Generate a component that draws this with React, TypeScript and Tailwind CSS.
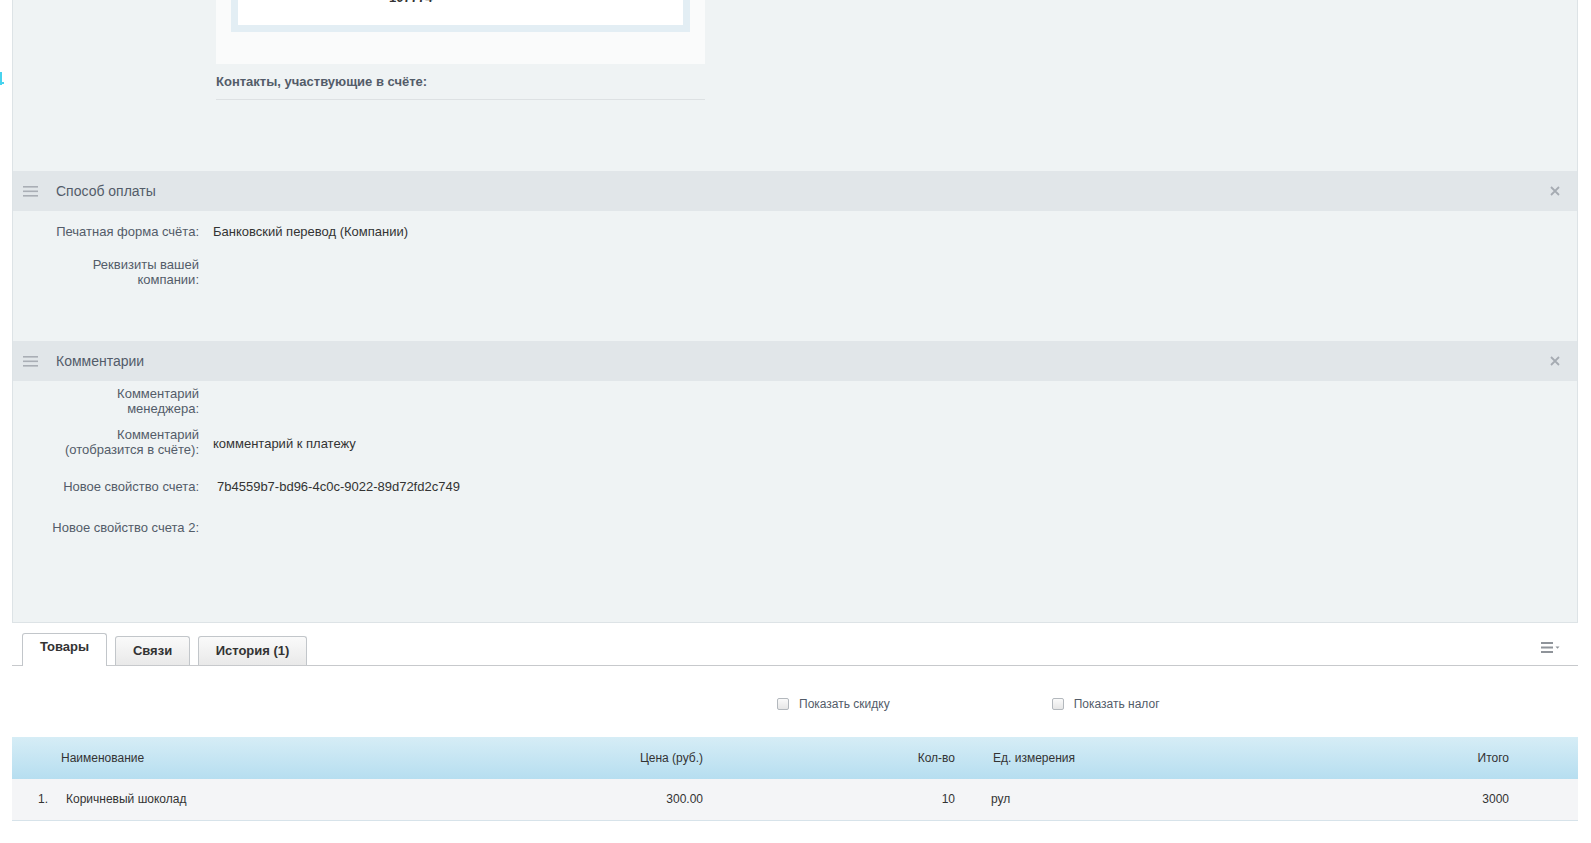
import React from "react";

function Burger() {
  return (
    <svg width="15" height="11" viewBox="0 0 15 11" className="shrink-0">
      <rect x="0" y="0" width="15" height="1.6" fill="#a9aeb5" />
      <rect x="0" y="4.5" width="15" height="1.6" fill="#a9aeb5" />
      <rect x="0" y="9" width="15" height="1.6" fill="#a9aeb5" />
    </svg>
  );
}

function Cross() {
  return (
    <svg width="10" height="10" viewBox="0 0 10 10">
      <path d="M1 1 L9 9 M9 1 L1 9" stroke="#a5abb2" strokeWidth="1.8" />
    </svg>
  );
}

function SectionHeader({ title }: { title: string }) {
  return (
    <div className="h-[40px] bg-[#e1e6e9] flex items-center pl-[10px] pr-[17px]">
      <Burger />
      <span className="ml-[18px] text-[14px] text-[#535c69]">{title}</span>
      <span className="ml-auto flex items-center">
        <Cross />
      </span>
    </div>
  );
}

function Field({ label, value, className = "", valueClass = "" }: { label: React.ReactNode; value?: string; className?: string; valueClass?: string }) {
  return (
    <div className={`flex items-center ${className}`}>
      <div className="w-[186px] text-right text-[13px] leading-[15px] text-[#535c69]">{label}</div>
      {value && <div className={`ml-[14px] text-[13px] leading-[15px] text-[#333] ${valueClass}`}>{value}</div>}
    </div>
  );
}

function Checkbox({ label }: { label: string }) {
  return (
    <label className="flex items-center h-[14px]">
      <span className="w-[12px] h-[12px] rounded-[2px] border border-[#b3b8bd] bg-gradient-to-b from-[#fafafa] to-[#e6e6e6]" />
      <span className="ml-[10px] text-[12px] leading-[14px] text-[#535c69]">{label}</span>
    </label>
  );
}

export default function App() {
  return (
    <div className="relative min-h-screen bg-white font-['Liberation_Sans',Arial,sans-serif] overflow-hidden">
      {/* stray marker at the left edge */}
      <div className="absolute left-0 top-[72px] w-[2px] h-[13px] bg-[#48d3ee]" />
      <div className="absolute left-0 top-[82px] w-[4px] h-[2px] bg-[#48d3ee]" />

      {/* main panel */}
      <div className="ml-[12px] w-[1566px] bg-[#eff3f4] border-l border-r border-b border-[#dde3e6] pb-[87px]">
        <div className="pl-[203px]">
          <div className="w-[489px] h-[64px] bg-[#fafbfb] px-[15px] overflow-hidden">
            <div className="-mt-[30px] h-[62px] border-[7px] border-[#e3eef4] bg-white flex">
              <span className="mt-[11px] ml-[151px] text-[13px] font-bold text-[#333]">107774</span>
            </div>
          </div>
          <div className="w-[489px] h-[36px] pt-[10px] border-b border-[#dde1e3] text-[13px] leading-[16px] font-bold text-[#535c69]">
            Контакты, участвующие в счёте:
          </div>
        </div>

        <div className="mt-[71px]">
          <SectionHeader title="Способ оплаты" />
          <div className="pt-[12px] pb-[54px]">
            <Field label="Печатная форма счёта:" value="Банковский перевод (Компании)" className="h-[16px]" />
            <Field label={<>Реквизиты вашей<br />компании:</>} className="mt-[18px]" />
          </div>
        </div>

        <SectionHeader title="Комментарии" />
        <div className="pt-[5px]">
          <Field label={<>Комментарий<br />менеджера:</>} />
          <Field label={<>Комментарий<br />(отобразится в счёте):</>} value="комментарий к платежу" className="mt-[11px]" valueClass="pt-[2px]" />
          <Field label="Новое свойство счета:" value="7b4559b7-bd96-4c0c-9022-89d72fd2c749" className="mt-[22px]" valueClass="ml-[18px]" />
          <Field label="Новое свойство счета 2:" className="mt-[26px]" />
        </div>
      </div>

      {/* tabs */}
      <div className="ml-[12px] w-[1566px] mt-[10px] flex items-end border-b border-[#c7c9cc] pl-[10px] pr-[17px]">
        <div className="h-[33px] w-[85px] -mb-px bg-white border border-b-0 border-[#c2c6ca] rounded-t-[3px] flex items-center justify-center pb-[6px] text-[13px] font-bold text-[#333]">
          Товары
        </div>
        <div className="ml-[8px] h-[29px] w-[75px] bg-gradient-to-b from-[#fafafa] to-[#e9e9e9] border border-b-0 border-[#c2c6ca] rounded-t-[3px] flex items-center justify-center text-[13px] font-bold text-[#333]">
          Связи
        </div>
        <div className="ml-[8px] h-[29px] w-[109px] bg-gradient-to-b from-[#fafafa] to-[#e9e9e9] border border-b-0 border-[#c2c6ca] rounded-t-[3px] flex items-center justify-center text-[13px] font-bold text-[#333]">
          История (1)
        </div>
        <div className="ml-auto mb-[12px] flex items-center">
          <svg width="20" height="11" viewBox="0 0 20 11">
            <rect x="0" y="0" width="12" height="2" fill="#8f949a" />
            <rect x="0" y="4.5" width="12" height="2" fill="#8f949a" />
            <rect x="0" y="9" width="12" height="2" fill="#8f949a" />
            <path d="M14.5 4.5 L18.5 4.5 L16.5 6.8 Z" fill="#8f949a" />
          </svg>
        </div>
      </div>

      {/* options */}
      <div className="h-[71px] flex items-start pt-[31px]">
        <div className="ml-[777px]">
          <Checkbox label="Показать скидку" />
        </div>
        <div className="ml-[162px]">
          <Checkbox label="Показать налог" />
        </div>
      </div>

      {/* products table */}
      <table className="ml-[12px] w-[1566px] table-fixed border-collapse text-[12px] text-[#333]">
        <colgroup>
          <col className="w-[44px]" />
          <col className="w-[560px]" />
          <col className="w-[97px]" />
          <col className="w-[252px]" />
          <col className="w-[165px]" />
          <col className="w-[389px]" />
          <col className="w-[59px]" />
        </colgroup>
        <thead>
          <tr className="h-[42px] bg-gradient-to-b from-[#d6edf6] to-[#b6def0]">
            <th className="font-normal" />
            <th className="font-normal text-left pl-[5px]">Наименование</th>
            <th className="font-normal text-right pr-[10px]">Цена (руб.)</th>
            <th className="font-normal text-right pr-[10px]">Кол-во</th>
            <th className="font-normal text-left pl-[28px]">Ед. измерения</th>
            <th className="font-normal text-right pr-[10px]">Итого</th>
            <th className="font-normal" />
          </tr>
        </thead>
        <tbody>
          <tr className="h-[41px] bg-[#f4f5f7] border-b border-[#d7e3ea]">
            <td className="text-right pr-[8px]">1.</td>
            <td className="pl-[10px]">Коричневый шоколад</td>
            <td className="text-right pr-[10px]">300.00</td>
            <td className="text-right pr-[10px]">10</td>
            <td className="pl-[26px]">рул</td>
            <td className="text-right pr-[10px]">3000</td>
            <td />
          </tr>
        </tbody>
      </table>
    </div>
  );
}
